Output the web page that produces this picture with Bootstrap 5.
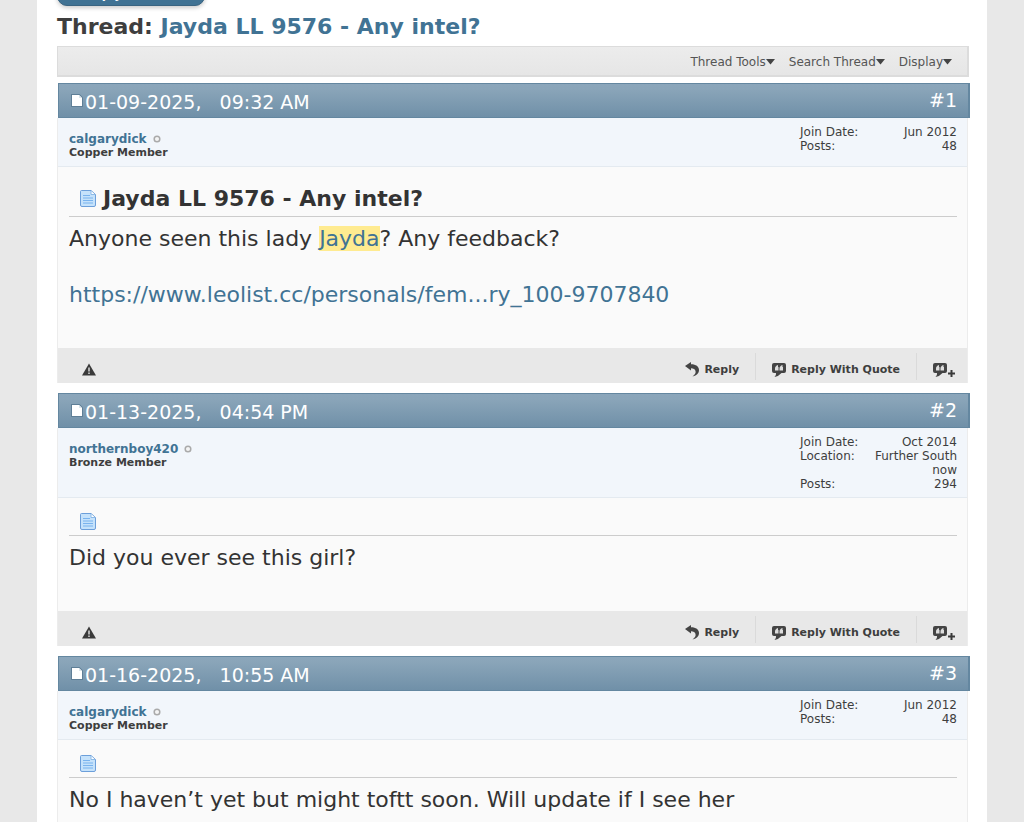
<!DOCTYPE html>
<html lang="en">
<head>
<meta charset="utf-8">
<meta name="viewport" content="width=device-width, initial-scale=1">
<title>Thread: Jayda LL 9576 - Any intel?</title>
<link href="https://cdn.jsdelivr.net/npm/bootstrap@5.3.0/dist/css/bootstrap.min.css" rel="stylesheet">
<style>
body { background: #e8e8e8; font-family: Verdana, "DejaVu Sans", sans-serif; font-size: 12px; line-height: 14px; color: #3e3e3e; }
a { color: #417394; text-decoration: none; }
.page-body { margin: 0 37px; padding: 0 17px 0 20px; background: #fff; min-height: 100vh; overflow: hidden; }
.new-reply { display: block; width: 148px; height: 28px; margin-top: -22px; padding: 3px 0 0; border: 1px solid #3a6582; border-radius: 10px; background: #417394; color: #fff; box-shadow: 0 2px 4px #0003; font-size: 12px; font-weight: bold; }
.thread-title { font-size: 22px; line-height: 30px; font-weight: bold; margin: 6px 0 4px; }
.tool-bar { height: 31px; border: 2px solid #dcdcdc; border-width: 1px 2px 2px 1px; background: linear-gradient(#ececec, #e6e6e6); padding: 2px 15px 0; gap: 14px; margin: 0 1px 6px 0; }
.tool-bar button { font-size: 12px; color: #555; }
.post-head { height: 35px; margin-left: 1px; padding: 0 11px 2px 12px; border: 1px solid #6487a0; border-width: 1px 2px 1px 1px; background: linear-gradient(#8ba6bb, #8aa5b9 15%, #7090a8); color: #fff; font-size: 19px; line-height: 24px; }
.post-head a { color: #fff; }
.post-frame { margin-right: 2px; border: 1px solid #ececec; border-width: 0 1px; background: #fafafa; }
.user-info { background: #f2f6fb; border-bottom: 1px solid #e4eaf0; padding: 7px 10px 6px 11px; min-height: 49px; }
.user-name { font-size: 12px; font-weight: bold; padding-top: 7px; }
.user-name svg { margin-left: 2px; vertical-align: 0; }
.user-rank { font-size: 11px; font-weight: bold; }
.stats { width: 157px; }
.stats dt { font-weight: normal; }
.stats dd { width: 84px; margin: 0; text-align: right; }
.post-body { padding: 0 10px 0 11px; font-size: 22px; line-height: 28px; color: #333; }
.post-title { font-size: 22px; line-height: 34px; font-weight: bold; border-bottom: 1px solid #ccc; padding: 15px 11px 0; gap: 7px; margin-bottom: 8px; }
.post-title svg { margin-bottom: 2px; }
.post-title.bare { height: 38px; padding-top: 11px; }
.post-text { padding-bottom: 39px; }
.hit { background: #ffeb90; color: #417394; }
.post-foot { height: 35px; background: #e8e8e8; margin: 0 0 10px; padding: 5px 12px 0 24px; font-size: 11px; }
.post-foot a { color: #3e3e3e; font-weight: bold; height: 27px; padding-top: 6px; gap: 5px; }
.post-foot .divided { border-left: 1px solid #dadada; }
</style>
</head>
<body>
<svg class="d-none" aria-hidden="true">
  <symbol id="i-page" viewBox="0 0 14 14"><path d="M0 0h8.500L12 3.500V13H0z" fill="#5f7f97"/><path d="M1 1h7l3 3v8H1z" fill="#fff"/><path d="M8 1 11 4H8z" fill="#dde6ec"/></symbol>
  <symbol id="i-doc" viewBox="0 0 16 17"><path d="M1.500 .5h9.500l4.500 4V15q0 1.500-1.500 1.500H2Q.5 16.500.5 15V1.500q0-1 1-1z" fill="#c5e2fb" stroke="#6c9fda"/><path d="M11 1v3.500h4" fill="#fff" stroke="#8dbbe8"/><path d="M3 5.500h7M3 8h10M3 10.500h10M3 13h10" stroke="#79b3ee"/></symbol>
  <symbol id="i-warn" viewBox="0 0 14 13"><path d="M7 .5 14 12.500H0z" fill="#3a3a3a"/><path d="M6.200 4.500h1.600v4H6.200zM6.200 9.500h1.600V11H6.200z" fill="#d0d0d0"/></symbol>
  <symbol id="i-reply" viewBox="0 0 14 15"><path d="M0 4 6 0v2.200c5 0 8 2.300 8 5.800 0 3-2 5.500-6.500 6.500 2.500-2 3.500-3.500 3-5.500C10 7 8.500 6.200 6 6.200V8.500z" fill="#444"/></symbol>
  <symbol id="i-bubble" viewBox="0 0 14 14"><path d="M2 0h10q2 0 2 2v6q0 2-2 2H9.500Q7 13 2.500 14q2-2 1.500-4H2Q0 10 0 8V2Q0 0 2 0z" fill="#444"/><path d="M3 5.500Q3 3 6 2v2h.5v3.500H3zM7.500 5.500q0-2.500 3-3.500v2h.5v3.500H7.500z" fill="#ddd"/></symbol>
  <symbol id="i-plus" viewBox="0 0 7 7"><path d="M3.500 0v7M0 3.500h7" stroke="#3a3a3a" stroke-width="2"/></symbol>
  <symbol id="i-off" viewBox="0 0 8 8"><circle cx="4" cy="4" r="2.800" fill="#f4f4f4" stroke="#aaa" stroke-width="1.500"/></symbol>
  <symbol id="i-down" viewBox="0 0 9 6"><path d="M0 0h9L4.500 5.500z" fill="#444"/></symbol>
</svg>
<main class="page-body">
  <button class="new-reply" type="button">+ Reply to Thread</button>
  <h1 class="thread-title">Thread: <a href="#">Jayda LL 9576 - Any intel?</a></h1>
  <div class="tool-bar d-flex justify-content-end align-items-center">
    <button class="btn d-flex align-items-center p-0 border-0 lh-1" type="button">Thread Tools<svg width="9" height="6"><use href="#i-down"/></svg></button>
    <button class="btn d-flex align-items-center p-0 border-0 lh-1" type="button">Search Thread<svg width="9" height="6"><use href="#i-down"/></svg></button>
    <button class="btn d-flex align-items-center p-0 border-0 lh-1" type="button">Display<svg width="9" height="6"><use href="#i-down"/></svg></button>
  </div>

  <article>
    <header class="post-head d-flex justify-content-between align-items-center">
      <div class="d-flex pt-1"><svg width="14" height="14" class="mt-1"><use href="#i-page"/></svg><time>01-09-2025, &nbsp; 09:32 AM</time></div>
      <a href="#">#1</a>
    </header>
    <div class="post-frame">
      <div class="user-info d-flex justify-content-between">
        <div><div class="user-name"><a href="#">calgarydick</a> <svg width="8" height="8"><use href="#i-off"/></svg></div><div class="user-rank">Copper Member</div></div>
        <dl class="stats d-flex flex-wrap justify-content-between align-content-start mb-0"><dt>Join Date:</dt><dd>Jun 2012</dd><dt>Posts:</dt><dd>48</dd></dl>
      </div>
      <div class="post-body">
        <h2 class="post-title d-flex align-items-center"><svg width="16" height="17"><use href="#i-doc"/></svg>Jayda LL 9576 - Any intel?</h2>
        <div class="post-text">Anyone seen this lady <span class="hit">Jayda</span>? Any feedback?<br><br><a href="#">https://www.leolist.cc/personals/fem...ry_100-9707840</a></div>
      </div>
      <footer class="post-foot d-flex justify-content-between">
        <a href="#" class="d-flex align-items-center" aria-label="Report"><svg width="14" height="13"><use href="#i-warn"/></svg></a>
        <div class="d-flex">
          <a href="#" class="d-flex align-items-center pe-3"><svg width="14" height="15"><use href="#i-reply"/></svg>Reply</a>
          <a href="#" class="d-flex align-items-center divided px-3"><svg width="14" height="14"><use href="#i-bubble"/></svg>Reply With Quote</a>
          <a href="#" class="d-flex align-items-center divided ps-3" aria-label="Multi-Quote"><svg width="22" height="14"><use href="#i-bubble" width="14" height="14"/><use href="#i-plus" x="15" y="7" width="7" height="7"/></svg></a>
        </div>
      </footer>
    </div>
  </article>

  <article>
    <header class="post-head d-flex justify-content-between align-items-center">
      <div class="d-flex pt-1"><svg width="14" height="14" class="mt-1"><use href="#i-page"/></svg><time>01-13-2025, &nbsp; 04:54 PM</time></div>
      <a href="#">#2</a>
    </header>
    <div class="post-frame">
      <div class="user-info d-flex justify-content-between">
        <div><div class="user-name"><a href="#">northernboy420</a> <svg width="8" height="8"><use href="#i-off"/></svg></div><div class="user-rank">Bronze Member</div></div>
        <dl class="stats d-flex flex-wrap justify-content-between align-content-start mb-0"><dt>Join Date:</dt><dd>Oct 2014</dd><dt>Location:</dt><dd>Further South now</dd><dt>Posts:</dt><dd>294</dd></dl>
      </div>
      <div class="post-body">
        <div class="post-title bare d-flex align-items-center"><svg width="16" height="17"><use href="#i-doc"/></svg></div>
        <div class="post-text">Did you ever see this girl?</div>
      </div>
      <footer class="post-foot d-flex justify-content-between">
        <a href="#" class="d-flex align-items-center" aria-label="Report"><svg width="14" height="13"><use href="#i-warn"/></svg></a>
        <div class="d-flex">
          <a href="#" class="d-flex align-items-center pe-3"><svg width="14" height="15"><use href="#i-reply"/></svg>Reply</a>
          <a href="#" class="d-flex align-items-center divided px-3"><svg width="14" height="14"><use href="#i-bubble"/></svg>Reply With Quote</a>
          <a href="#" class="d-flex align-items-center divided ps-3" aria-label="Multi-Quote"><svg width="22" height="14"><use href="#i-bubble" width="14" height="14"/><use href="#i-plus" x="15" y="7" width="7" height="7"/></svg></a>
        </div>
      </footer>
    </div>
  </article>

  <article>
    <header class="post-head d-flex justify-content-between align-items-center">
      <div class="d-flex pt-1"><svg width="14" height="14" class="mt-1"><use href="#i-page"/></svg><time>01-16-2025, &nbsp; 10:55 AM</time></div>
      <a href="#">#3</a>
    </header>
    <div class="post-frame">
      <div class="user-info d-flex justify-content-between">
        <div><div class="user-name"><a href="#">calgarydick</a> <svg width="8" height="8"><use href="#i-off"/></svg></div><div class="user-rank">Copper Member</div></div>
        <dl class="stats d-flex flex-wrap justify-content-between align-content-start mb-0"><dt>Join Date:</dt><dd>Jun 2012</dd><dt>Posts:</dt><dd>48</dd></dl>
      </div>
      <div class="post-body">
        <div class="post-title bare d-flex align-items-center"><svg width="16" height="17"><use href="#i-doc"/></svg></div>
        <div class="post-text">No I haven’t yet but might toftt soon. Will update if I see her</div>
      </div>
    </div>
  </article>
</main>
<script src="https://cdn.jsdelivr.net/npm/bootstrap@5.3.0/dist/js/bootstrap.bundle.min.js"></script>
</body>
</html>
